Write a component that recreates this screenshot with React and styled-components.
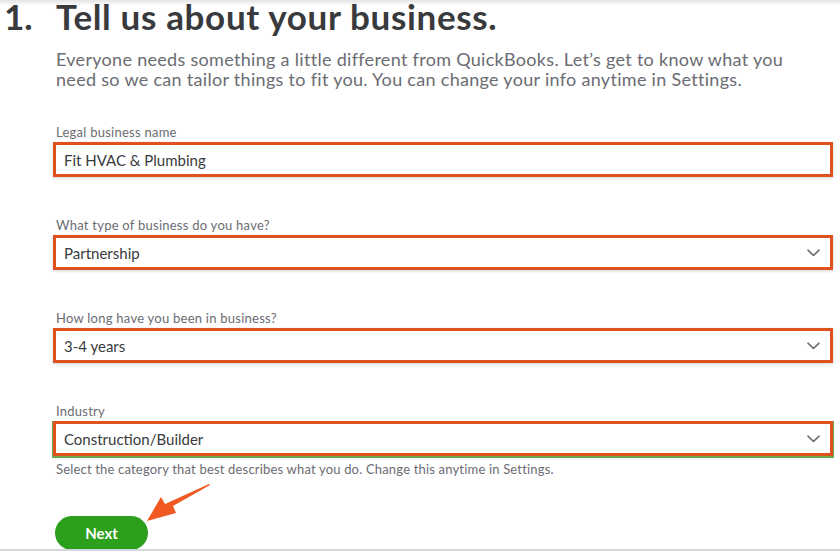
import React from "react";
import styled, { createGlobalStyle } from "styled-components";

const GlobalStyle = createGlobalStyle`
    html, body {
        margin: 0;
        padding: 0;
        background: #fff;
    }
    body {
        font-family: Lato, "Open Sans", sans-serif;
        color: #393a3d;
    }
`;

const Page = styled.div`
    width: 840px;
    height: 551px;
    overflow: hidden;
    position: relative;
    background: linear-gradient(#e4e4e4 0px, #ffffff 6px);
    display: flex;
    flex-direction: column;
    border-bottom: 2px solid #d4d7dc;
    box-sizing: border-box;
`;

const HeadingRow = styled.div`
    display: flex;
    align-items: baseline;
    line-height: 32px;
`;

const StepNumber = styled.div`
    width: 56px;
    padding-left: 4px;
    box-sizing: border-box;
    font-size: 35px;
    font-weight: 700;
    color: #393a3d;
`;

const Title = styled.h1`
    margin: 0;
    font-size: 35px;
    line-height: 32px;
    font-weight: 700;
    color: #393a3d;
    letter-spacing: 0.65px;
`;

const Content = styled.div`
    margin-left: 53px;
    width: 780px;
    display: flex;
    flex-direction: column;
`;

const Intro = styled.p`
    margin: 17px 0 0;
    padding-left: 3px;
    font-size: 18px;
    line-height: 20px;
    color: #6b6c72;
    letter-spacing: 0.3px;
`;

const Form = styled.div`
    display: flex;
    flex-direction: column;
    gap: 40px;
    margin-top: 35px;
`;

const Field = styled.div`
    display: flex;
    flex-direction: column;
`;

const Label = styled.label`
    padding-left: 3px;
    font-size: 13px;
    line-height: 16px;
    letter-spacing: 0.25px;
    margin-bottom: 2px;
    color: #6b6c72;
`;

const Box = styled.div`
    height: 35px;
    box-sizing: border-box;
    border: 3px solid #df5220;
    background: #fff;
    display: flex;
    align-items: center;
    justify-content: space-between;
    padding: 0 8px 0 8px;
    box-shadow: ${p => p.$focused
        ? "0 1px 0 1px #6aa84f, 0 2px 3px rgba(0,0,0,0.15)"
        : "0 1px 3px rgba(0,0,0,0.18)"};
`;

const Value = styled.span`
    font-size: 15px;
    color: #393a3d;
`;

const Chevron = styled.svg`
    width: 13px;
    height: 8px;
    margin-right: 2px;
`;

const Helper = styled.div`
    margin-top: 5px;
    padding-left: 3px;
    font-size: 13px;
    line-height: 16px;
    letter-spacing: 0.18px;
    color: #6b6c72;
`;

const Actions = styled.div`
    position: relative;
    margin-top: 39px;
    padding-left: 2px;
`;

const NextButton = styled.button`
    width: 93px;
    height: 34px;
    border: none;
    border-radius: 17px;
    background: #2ca01c;
    color: #fff;
    font-family: Lato, "Open Sans", sans-serif;
    font-size: 15px;
    font-weight: 700;
    cursor: pointer;
`;

const Arrow = styled.svg`
    position: absolute;
    left: 90px;
    top: -32px;
    width: 70px;
    height: 44px;
`;

const fields = [
    { label: "Legal business name", value: "Fit HVAC & Plumbing" },
    { label: "What type of business do you have?", value: "Partnership", select: true },
    { label: "How long have you been in business?", value: "3-4 years", select: true },
    { label: "Industry", value: "Construction/Builder", select: true, focused: true },
];

const App = () => {
    return (
        <Page>
            <GlobalStyle />
            <HeadingRow>
                <StepNumber>1.</StepNumber>
                <Title>Tell us about your business.</Title>
            </HeadingRow>
            <Content>
                <Intro>
                    Everyone needs something a little different from QuickBooks. Let’s get to know what you
                    <br />
                    need so we can tailor things to fit you. You can change your info anytime in Settings.
                </Intro>
                <Form>
                    {fields.map((f, i) => (
                        <Field key={i}>
                            <Label>{f.label}</Label>
                            <Box $focused={f.focused}>
                                <Value>{f.value}</Value>
                                {f.select && (
                                    <Chevron viewBox="0 0 13 8">
                                        <path d="M1 1.2 L6.5 6.5 L12 1.2" fill="none" stroke="#6b6c72" strokeWidth="1.6" strokeLinecap="round" strokeLinejoin="round" />
                                    </Chevron>
                                )}
                            </Box>
                            {f.focused && (
                                <Helper>Select the category that best describes what you do. Change this anytime in Settings.</Helper>
                            )}
                        </Field>
                    ))}
                </Form>
                <Actions>
                    <NextButton>Next</NextButton>
                    <Arrow viewBox="0 0 70 44">
                        <path d="M67 1 L30 22 L33 29 L4 37 L18 13 L22 20 L66 0 Z" fill="#f05a22" />
                    </Arrow>
                </Actions>
            </Content>
        </Page>
    );
};

export default App;
